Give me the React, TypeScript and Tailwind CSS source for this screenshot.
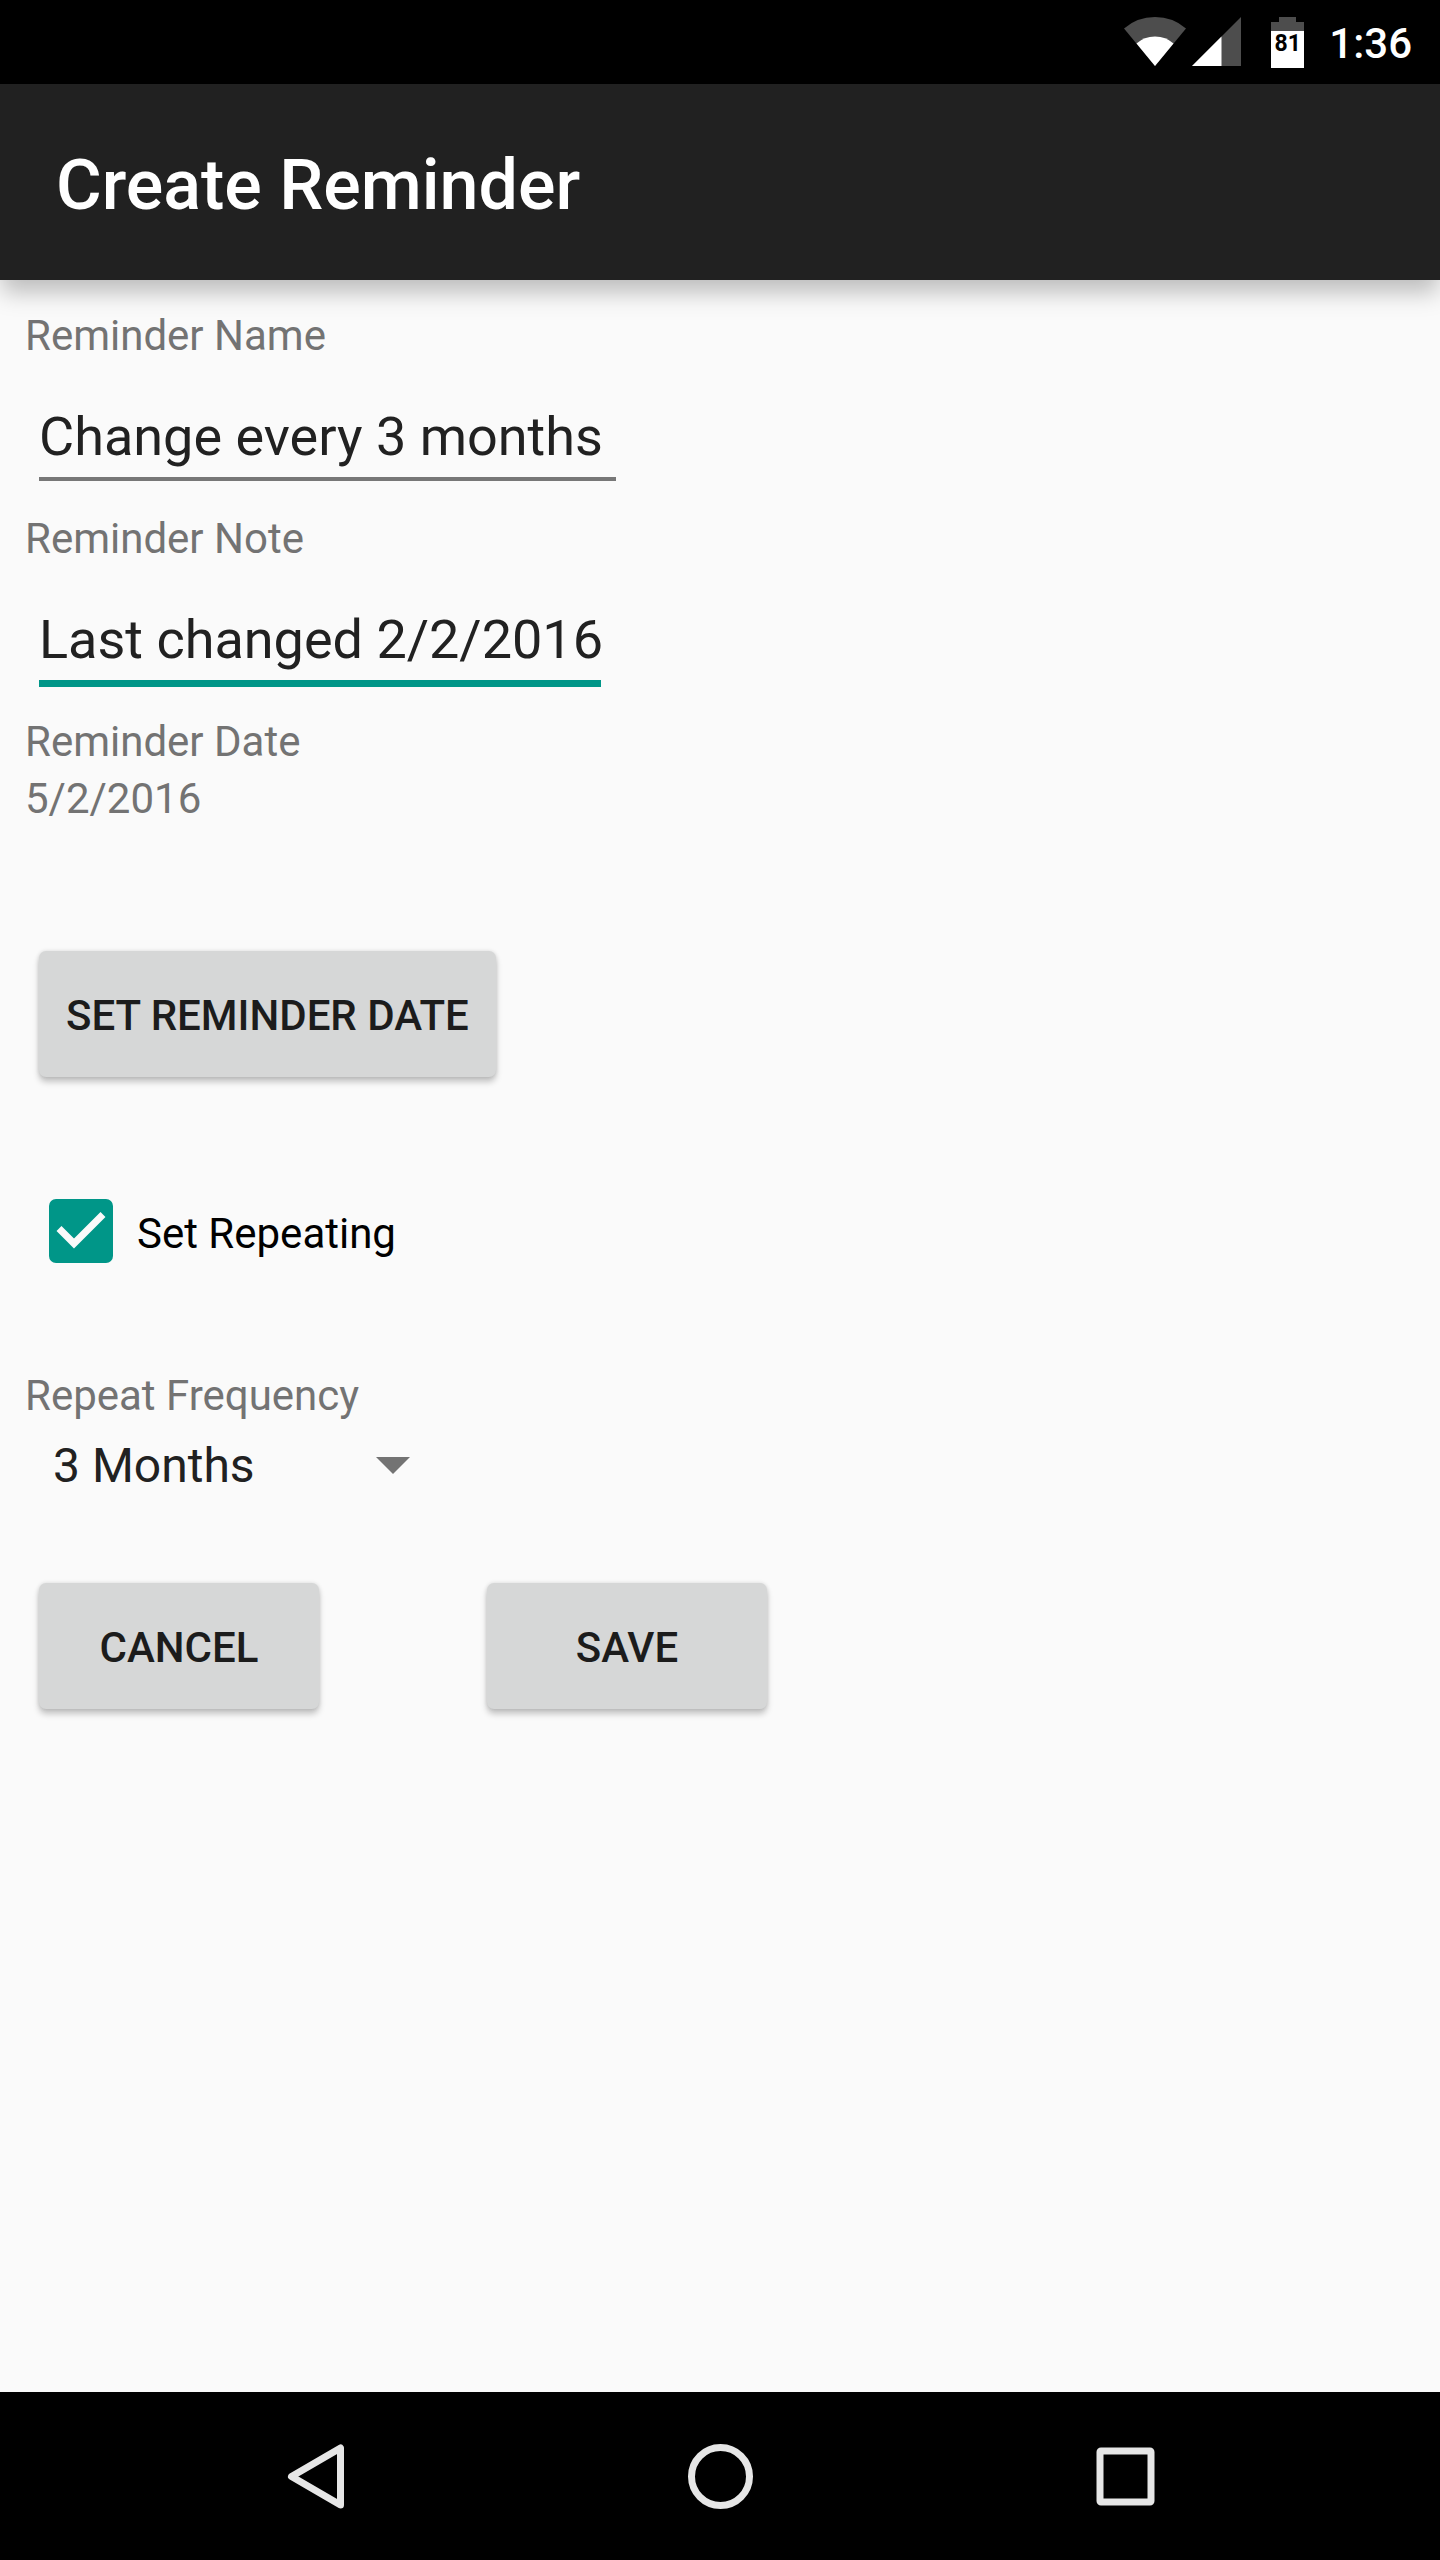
import { useState } from "react";

const FREQUENCIES = ["1 Month", "2 Months", "3 Months", "6 Months"];

const raised =
  "h-[126px] rounded-[7px] bg-[#d6d7d7] pt-[4px] text-[42px] leading-[50px] font-medium text-[#1c1c1c] uppercase shadow-[0_5px_6px_rgba(0,0,0,0.22),0_0_4px_rgba(0,0,0,0.12)]";

const field =
  "block pb-[7px] text-[54px] leading-[66px] text-[#212121] outline-none";

function StatusBar() {
  return (
    <div className="flex h-[84px] items-center justify-end bg-black pr-[28px] text-white">
      <svg width="62" height="50" viewBox="0 0 62 50" className="mr-[6px]" aria-label="Wi-Fi">
        <path d="M31 49 0 11.500Q13 0 31 0T62 11.500Z" fill="#4d4d4d" />
        <path d="M31 49 12.500 26.500Q20 19.500 31 19.500T49.500 26.500Z" fill="#fff" />
      </svg>
      <svg width="50" height="50" viewBox="0 0 50 50" className="mr-[29px]" aria-label="Mobile signal">
        <path d="M49 0V49H0Z" fill="#4d4d4d" />
        <path d="M29.500 19.500V49H0Z" fill="#fff" />
      </svg>
      <div className="relative mr-[25px]">
        <svg width="33" height="51" viewBox="0 0 33 51" className="block" aria-hidden="true">
          <path d="M8 0H25V5H33V15H0V5H8Z" fill="#4d4d4d" />
          <path d="M0 14H33V51H0Z" fill="#fff" />
        </svg>
        <span className="absolute inset-x-0 top-[14px] text-center text-[23px] leading-[26px] font-bold text-black">
          81
        </span>
      </div>
      <span className="pt-[3px] text-[42px] leading-[50px] font-medium">1:36</span>
    </div>
  );
}

function NavBar() {
  const item = "flex h-full w-[405px] items-center justify-center";
  return (
    <nav className="flex h-[168px] justify-center bg-black">
      <button type="button" aria-label="Back" className={item}>
        <svg width="66" height="66" viewBox="0 0 66 66" fill="none" stroke="#e6e6e6" strokeWidth="7" strokeLinejoin="round">
          <path d="M58.500 5V62L9.500 33.500Z" />
        </svg>
      </button>
      <button type="button" aria-label="Home" className={item}>
        <svg width="66" height="66" viewBox="0 0 66 66" fill="none" stroke="#e6e6e6" strokeWidth="7">
          <circle cx="33.500" cy="33.500" r="29" />
        </svg>
      </button>
      <button type="button" aria-label="Recent apps" className={item}>
        <svg width="66" height="66" viewBox="0 0 66 66" fill="none" stroke="#e6e6e6" strokeWidth="7" strokeLinejoin="round">
          <rect x="8" y="8" width="51" height="51" rx="1" />
        </svg>
      </button>
    </nav>
  );
}

export default function App() {
  const [name, setName] = useState("Change every 3 months");
  const [note, setNote] = useState("Last changed 2/2/2016");
  const [repeating, setRepeating] = useState(true);
  const [frequency, setFrequency] = useState("3 Months");

  return (
    <div className="flex min-h-screen flex-col bg-[#fafafa] font-[Roboto,sans-serif]">
      <StatusBar />
      <header className="z-10 flex h-[196px] items-center bg-[#212121] px-[56px] pt-[6px] shadow-[0_14px_22px_-2px_rgba(0,0,0,0.25)]">
        <h1 className="text-[70px] leading-[82px] font-medium text-white">Create Reminder</h1>
      </header>

      <form className="flex flex-1 flex-col items-start px-[25px] pt-[27px] text-[42px] leading-[57px] text-[#737373]" onSubmit={(e) => e.preventDefault()}>
        <label htmlFor="name">Reminder Name</label>
        <div className="h-[146px] px-[14px] pt-[40px]">
          <input
            id="name"
            value={name}
            onChange={(e) => setName(e.target.value)}
            className={`${field} w-[577px] border-b-4 border-[#777777]`}
          />
        </div>
        <label htmlFor="note">Reminder Note</label>
        <div className="h-[146px] px-[14px] pt-[40px]">
          <input
            id="note"
            value={note}
            onChange={(e) => setNote(e.target.value)}
            className={`${field} w-[562px] border-b-[7px] border-[#009688]`}
          />
        </div>
        <p>Reminder Date</p>
        <p>5/2/2016</p>

        <button type="button" className={`${raised} mt-[124px] ml-[14px] px-[27px]`}>
          Set Reminder Date
        </button>

        <label className="mt-[122px] ml-[24px] flex items-center gap-[24px] text-black">
          <span className="relative h-[64px] w-[64px]">
            <input
              type="checkbox"
              checked={repeating}
              onChange={(e) => setRepeating(e.target.checked)}
              className="peer block h-[64px] w-[64px] appearance-none rounded-[7px] border-[6px] border-[#737373] checked:border-[#009688] checked:bg-[#009688]"
            />
            <svg viewBox="0 0 64 64" fill="none" stroke="#fafafa" strokeWidth="7" className="pointer-events-none absolute inset-0 hidden h-full w-full peer-checked:block">
              <path d="M10 29.500 25 44.500 54 15.500" />
            </svg>
          </span>
          <span className="pt-1">Set Repeating</span>
        </label>

        <label htmlFor="frequency" className="mt-[104px]">
          Repeat Frequency
        </label>
        <div className="relative">
          <select
            id="frequency"
            value={frequency}
            onChange={(e) => setFrequency(e.target.value)}
            className="block h-[84px] w-[420px] appearance-none bg-transparent pl-[28px] text-[48px] leading-[58px] text-[#212121] outline-none"
          >
            {FREQUENCIES.map((f) => (
              <option key={f}>{f}</option>
            ))}
          </select>
          <svg width="34" height="17" viewBox="0 0 34 17" className="pointer-events-none absolute top-[33px] right-[35px]">
            <path d="M0 0H34L17 17Z" fill="#737373" />
          </svg>
        </div>

        <div className="mt-[75px] ml-[14px] flex gap-[168px]">
          <button type="button" className={`${raised} w-[280px]`}>
            Cancel
          </button>
          <button type="submit" className={`${raised} w-[280px]`}>
            Save
          </button>
        </div>
      </form>

      <NavBar />
    </div>
  );
}
